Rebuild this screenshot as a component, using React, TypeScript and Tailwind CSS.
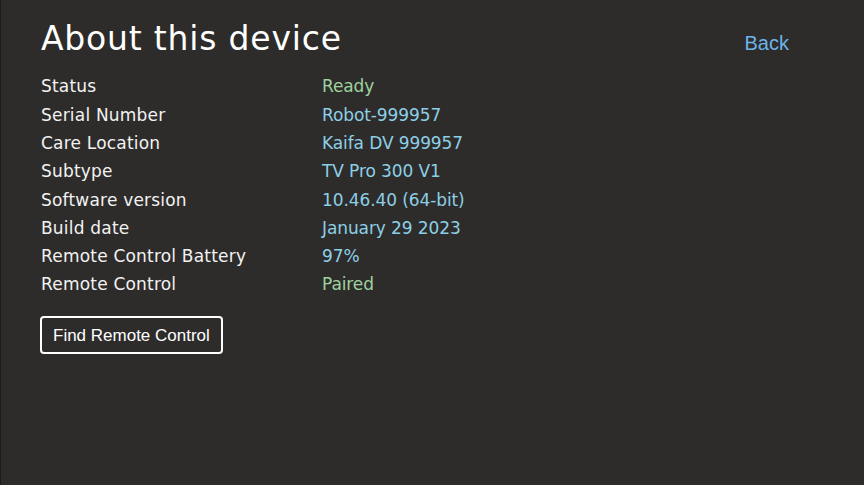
import React from "react";

const rows: { label: string; value: string; tone: "green" | "blue" }[] = [
  { label: "Status", value: "Ready", tone: "green" },
  { label: "Serial Number", value: "Robot-999957", tone: "blue" },
  { label: "Care Location", value: "Kaifa DV 999957", tone: "blue" },
  { label: "Subtype", value: "TV Pro 300 V1", tone: "blue" },
  { label: "Software version", value: "10.46.40 (64-bit)", tone: "blue" },
  { label: "Build date", value: "January 29 2023", tone: "blue" },
  { label: "Remote Control Battery", value: "97%", tone: "blue" },
  { label: "Remote Control", value: "Paired", tone: "green" },
];

export default function App() {
  return (
    <div className="w-[864px] h-[485px] bg-[#2d2c2a] border-l border-[#1c1b1a] overflow-hidden font-['DejaVu_Sans',sans-serif]">
      <div className="flex items-start justify-between pl-[40px] pr-[75px] pt-[18px]">
        <h1 className="text-[33px] leading-[42px] text-white font-normal tracking-[0.8px]">About this device</h1>
        <button className="mt-[13px] text-[20px] leading-[24px] text-[#6cb4e8] font-['Liberation_Sans',sans-serif]">Back</button>
      </div>
      <div className="pl-[40px] pt-[13px] flex flex-col">
        {rows.map((r) => (
          <div key={r.label} className="flex h-[28.3px] items-center text-[17px]">
            <span className="w-[281px] text-[#f2f2f2] tracking-[0.2px]">{r.label}</span>
            <span className={r.tone === "green" ? "text-[#9fd19f] tracking-[-0.1px]" : "text-[#8dcfe6] tracking-[-0.1px]"}>{r.value}</span>
          </div>
        ))}
      </div>
      <div className="pl-[39px] pt-[17px]">
        <button className="h-[38px] px-[11px] border-2 border-white rounded-[4px] text-white text-[17px] font-['Liberation_Sans',sans-serif]">
          Find Remote Control
        </button>
      </div>
    </div>
  );
}
